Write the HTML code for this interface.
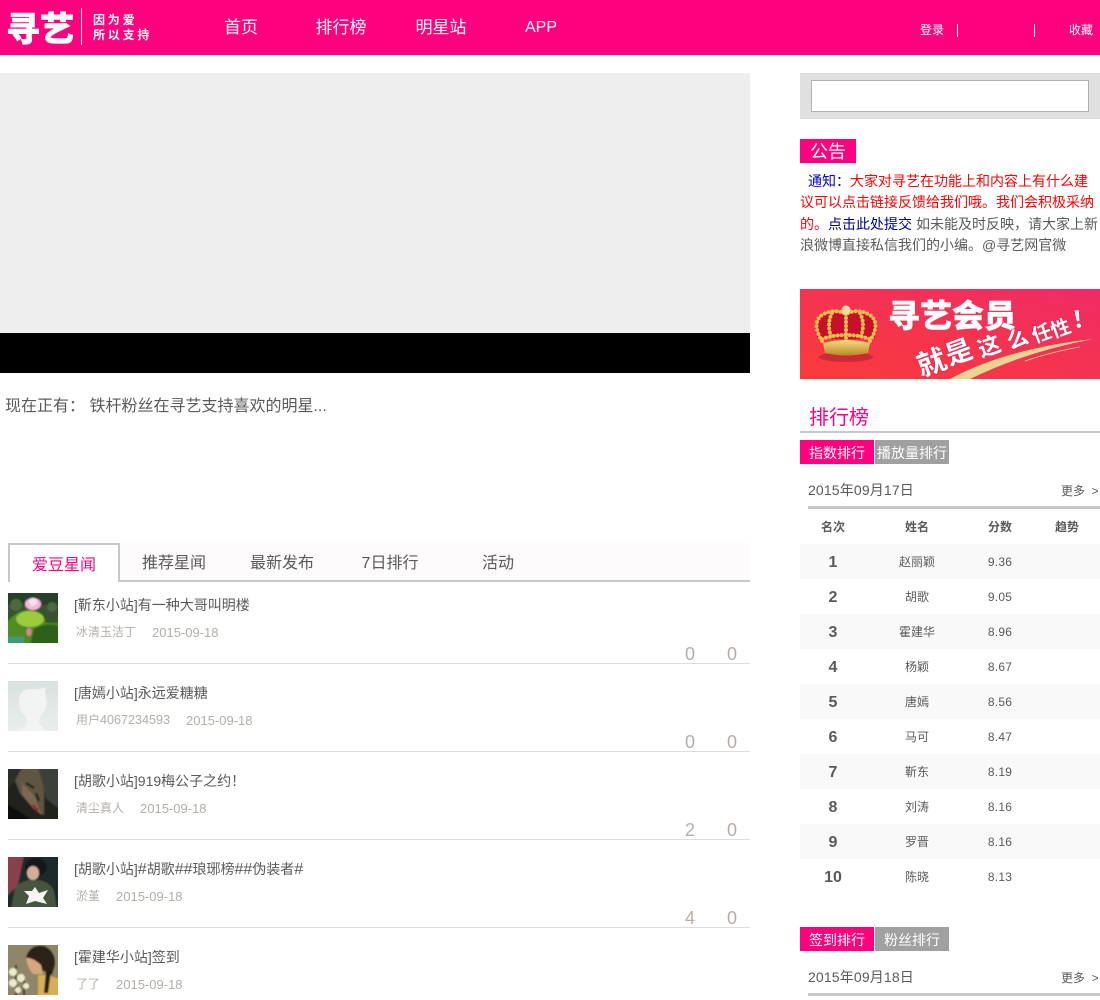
<!DOCTYPE html>
<html lang="zh"><head><meta charset="utf-8"><title>寻艺</title>
<style>
html,body{margin:0;padding:0;background:#fff}
body{width:1100px;height:1000px;overflow:hidden;position:relative;font-family:"Liberation Sans","Noto Sans CJK SC",sans-serif;color:#5a5a5a}
.a,.a *{box-sizing:border-box}
.a{position:absolute;white-space:nowrap}
.t{position:absolute;white-space:nowrap;line-height:20px}
.c{transform:translateX(-50%)}
.h{font-size:14px}
.u{font-size:12px;color:#b5aea8}
.d{font-size:13px;color:#b5aea8}
.n{font-size:18px;color:#b5aea8}
.r{font-size:16px;font-weight:700;transform:translateX(-50%)}
.m{font-size:12px;transform:translateX(-50%)}
.s{font-size:12px;letter-spacing:.2px;transform:translateX(-50%)}
.th{font-size:12px;font-weight:700;transform:translateX(-50%)}
.sl{left:93px;font-size:12px;font-weight:700;color:#fff;letter-spacing:2.8px}
.nav{font-size:17px;color:#fff;transform:translateX(-50%)}
.tc{font-family:"Noto Sans CJK TC",sans-serif}
.hs{font-size:16px}
</style></head><body>
<div class="a" style="left:0;top:0;width:1100px;height:55px;background:#ff007f"></div>
<div class="t" style="left:6px;top:8px;font-size:34px;line-height:38px;font-weight:900;color:#fff;-webkit-text-stroke:.6px #fff;font-family:'Noto Sans CJK SC',sans-serif">寻艺</div>
<div class="a" style="left:81px;top:8px;width:1px;height:37px;background:#fff"></div>
<div class="t sl" style="top:10px">因为爱</div>
<div class="t sl" style="top:25px">所以支持</div>
<div class="t nav" style="left:241px;top:18px">首页</div>
<div class="t nav" style="left:341px;top:18px">排行榜</div>
<div class="t nav" style="left:441px;top:18px">明星站</div>
<div class="t nav" style="left:541px;top:18px;font-size:16px">APP</div>
<div class="t" style="left:920px;top:20px;font-size:12px;color:#fff">登录</div>
<div class="a" style="left:957px;top:24px;width:1px;height:13px;background:#fff"></div>
<div class="a" style="left:1034px;top:24px;width:1px;height:13px;background:#fff"></div>
<div class="t" style="left:1069px;top:20px;font-size:12px;color:#fff">收藏</div>

<div class="a" style="left:0;top:73px;width:750px;height:260px;background:#eee"></div>
<div class="a" style="left:0;top:333px;width:750px;height:40px;background:#000"></div>
<div class="t" style="left:5px;top:394px;font-size:16px">现在正有<span class="tc">：</span> 铁杆粉丝在寻艺支持喜欢的明星...</div>

<div class="a" style="left:8px;top:543px;width:742px;height:37px;background:#fdfbfc"></div>
<div class="a" style="left:120px;top:580px;width:630px;height:2px;background:#c8c8c8"></div>
<div class="a" style="left:8px;top:543px;width:112px;height:39px;background:#fff;border:2px solid #c8c8c8;border-bottom:0"></div>
<div class="t c" style="left:64px;top:556px;font-size:16px;color:#ff007f">爱豆星闻</div>
<div class="t c" style="left:174px;top:554px;font-size:16px">推荐星闻</div>
<div class="t c" style="left:282px;top:554px;font-size:16px">最新发布</div>
<div class="t c" style="left:390px;top:554px;font-size:16px">7日排行</div>
<div class="t c" style="left:498px;top:554px;font-size:16px">活动</div>

<svg width="0" height="0" style="position:absolute"><defs><filter id="b" x="-5%" y="-5%" width="110%" height="110%"><feGaussianBlur stdDeviation=".7"/></filter></defs></svg>

<!-- item 1 -->
<svg class="a" style="left:8px;top:593px" width="50" height="50" viewBox="0 0 50 50"><g filter="url(#b)"><rect x="-2" y="-2" width="54" height="54" fill="#37532f"/><rect x="-2" y="-2" width="54" height="14" fill="#25402c"/><circle cx="8" cy="12" r="6" fill="#4b6a3c"/><circle cx="44" cy="14" r="5" fill="#4b6b3f"/><path d="M-2 30Q8 18 20 17Q34 17 38 30L50 30V52H-2Z" fill="#4f8c22"/><ellipse cx="22" cy="26" rx="14" ry="8" fill="#9ccc3e"/><path d="M26 36Q38 29 52 33V52H22Z" fill="#2e5f1f"/><ellipse cx="25" cy="11" rx="8" ry="6" fill="#f6b6d8"/><ellipse cx="25" cy="9" rx="4" ry="4" fill="#fbe2ef"/><rect x="-2" y="44" width="18" height="8" fill="#3c9b7c"/><ellipse cx="21" cy="39" rx="2.5" ry="4" fill="#e5809e"/></g></svg>
<div class="t h" style="left:74px;top:595px">[靳东小站]有一种大哥叫明楼</div>
<div class="t u" style="left:76px;top:622px">冰清玉洁丁</div>
<div class="t d" style="left:152px;top:623px">2015-09-18</div>
<div class="t n" style="left:685px;top:644px">0</div>
<div class="t n" style="left:727px;top:644px">0</div>
<div class="a" style="left:8px;top:663px;width:742px;height:1px;background:#ddd"></div>

<!-- item 2 -->
<svg class="a" style="left:8px;top:681px" width="50" height="50" viewBox="0 0 50 50"><defs><linearGradient id="g2" x1="0" x2="0" y1="0" y2="1"><stop offset="0" stop-color="#d9e2e0"/><stop offset="1" stop-color="#e9eeed"/></linearGradient></defs><rect width="50" height="50" fill="url(#g2)"/><path d="M11 22Q10 9 22 8Q30 9 38 6Q36 10 38 16Q40 26 35 32Q31 36 31 41Q33 47 40 50H10Q18 47 19 41Q19 36 15 33Q11 28 11 22Z" fill="#f1f4f3"/></svg>
<div class="t h" style="left:74px;top:683px">[唐嫣小站]永远爱糖糖</div>
<div class="t u" style="left:76px;top:710px">用户<span style="font-size:12.6px">4067234593</span></div>
<div class="t d" style="left:186px;top:711px">2015-09-18</div>
<div class="t n" style="left:685px;top:732px">0</div>
<div class="t n" style="left:727px;top:732px">0</div>
<div class="a" style="left:8px;top:751px;width:742px;height:1px;background:#ddd"></div>

<!-- item 3 -->
<svg class="a" style="left:8px;top:769px" width="50" height="50" viewBox="0 0 50 50"><g filter="url(#b)"><rect x="-2" y="-2" width="54" height="54" fill="#20241f"/><path d="M30 -2H52V40L38 30Z" fill="#3b403a"/><path d="M4 4L20 -2H30L36 20 36 46 26 40 12 24Z" fill="#5f5441"/><path d="M14 14L26 26 34 46 26 40 14 26Z" fill="#7d6652"/><path d="M18 14l8 5M28 24l3 8" stroke="#1e1410" stroke-width="2"/><path d="M25 36l5 6" stroke="#8a2a2a" stroke-width="2.5"/><path d="M-2 -2H14L6 14-2 20Z" fill="#2a2f29"/><path d="M-2 34L26 52H-2Z" fill="#111"/></g></svg>
<div class="t h" style="left:74px;top:771px">[胡歌小站]919梅公子之约！</div>
<div class="t u" style="left:76px;top:798px">清尘真人</div>
<div class="t d" style="left:140px;top:799px">2015-09-18</div>
<div class="t n" style="left:685px;top:820px">2</div>
<div class="t n" style="left:727px;top:820px">0</div>
<div class="a" style="left:8px;top:839px;width:742px;height:1px;background:#ddd"></div>

<!-- item 4 -->
<svg class="a" style="left:8px;top:857px" width="50" height="50" viewBox="0 0 50 50"><g filter="url(#b)"><rect x="-2" y="-2" width="54" height="54" fill="#1a2b2c"/><path d="M-2 -2H16L10 28 -2 40Z" fill="#8a3f4c"/><ellipse cx="28" cy="10" rx="11" ry="9" fill="#17181c"/><ellipse cx="25" cy="16" rx="6" ry="7" fill="#d4ae98"/><path d="M3 52L7 30Q16 22 26 23Q41 23 46 34L49 52Z" fill="#465540"/></g><path d="M27 30l4 6 9-3-5 8 4 6-12-3-9 3 3-8-5-5 8 0z" fill="#f4f4f0"/></svg>
<div class="t h" style="left:74px;top:859px">[胡歌小站]<span class="hs">#</span>胡歌<span class="hs">##</span>琅琊榜<span class="hs">##</span>伪装者<span class="hs">#</span></div>
<div class="t u" style="left:76px;top:886px">淤堇</div>
<div class="t d" style="left:116px;top:887px">2015-09-18</div>
<div class="t n" style="left:685px;top:908px">4</div>
<div class="t n" style="left:727px;top:908px">0</div>
<div class="a" style="left:8px;top:927px;width:742px;height:1px;background:#ddd"></div>

<!-- item 5 -->
<svg class="a" style="left:8px;top:945px" width="50" height="50" viewBox="0 0 50 50"><g filter="url(#b)"><rect x="-2" y="-2" width="54" height="54" fill="#8f8568"/><path d="M30 30L38 30 52 34V52H30Z" fill="#d8b052"/><path d="M18 12Q22 -1 36 1Q48 6 47 20L44 30 36 26Q22 24 18 12Z" fill="#2b2118"/><path d="M18 13Q24 12 33 20L35 29 25 29Q19 22 18 13Z" fill="#d7a67f"/><path d="M38 26l5 0-3 22-4 0Z" fill="#241d14"/><path d="M8 20V52M16 30V52" stroke="#3a3626" stroke-width="2"/><g fill="#ecebcd"><circle cx="5" cy="27" r="4"/><circle cx="13" cy="33" r="4"/><circle cx="5" cy="38" r="4"/><circle cx="18" cy="41" r="3"/><circle cx="10" cy="45" r="3"/></g></g></svg>
<div class="t h" style="left:74px;top:947px">[霍建华小站]签到</div>
<div class="t u" style="left:76px;top:974px">了了</div>
<div class="t d" style="left:116px;top:975px">2015-09-18</div>

<!-- right -->
<div class="a" style="left:800px;top:73px;width:300px;height:46px;background:#e0e0e0"></div>
<div class="a" style="left:811px;top:80px;width:278px;height:32px;background:#fff;border:1px solid #b0b0b0"></div>
<div class="a" style="left:800px;top:139px;width:56px;height:24px;background:#ff007f"></div>
<div class="t c" style="left:828px;top:142px;font-size:18px;color:#fff">公告</div>
<div class="t h" style="left:808px;top:171px;color:#00d">通知：</div>
<div class="t h" style="left:850px;top:171px;color:#f00">大家对寻艺在功能上和内容上有什么建</div>
<div class="t h" style="left:800px;top:192px;color:#f00">议可以点击链接反馈给我们哦。我们会积极采纳</div>
<div class="t h" style="left:800px;top:214px;color:#f00">的。</div>
<div class="t h" style="left:828px;top:214px;color:#008">点击此处提交</div>
<div class="t h" style="left:916px;top:214px">如未能及时反映，请大家上新</div>
<div class="t h" style="left:800px;top:235px">浪微博直接私信我们的小编。@寻艺网官微</div>

<!-- banner -->
<svg class="a" style="left:800px;top:289px" width="300" height="90" viewBox="0 0 300 90">
<defs><linearGradient id="g" x1="0" x2="1" y1="1" y2="0"><stop offset="0" stop-color="#fb3a3a"/><stop offset="1" stop-color="#ee2c66"/></linearGradient><linearGradient id="y" x1="0" x2="0" y1="0" y2="1"><stop offset="0" stop-color="#f3dc80"/><stop offset="1" stop-color="#b98a20"/></linearGradient></defs>
<rect width="300" height="90" fill="url(#g)"/>
<ellipse cx="46" cy="68" rx="27" ry="5" fill="#a71f30" opacity=".55"/>
<path d="M18 50Q10 32 22 26Q34 20 46 26Q58 20 70 26Q82 32 74 50Z" fill="#c90f2c"/>
<g fill="none" stroke="#e6bf4a" stroke-width="4" stroke-linecap="round" stroke-dasharray="0 4">
<path d="M22 52Q11 34 22 26Q34 19 46 25Q58 19 70 26Q81 34 70 52"/>
<path d="M46 25V50"/><path d="M32 24Q26 36 32 50"/><path d="M60 24Q66 36 60 50"/>
<path d="M22 50Q46 42 70 50"/></g>
<circle cx="46" cy="21" r="4.5" fill="#f4dca0"/>
<path d="M23 54Q46 48 70 54L68 64Q46 69 25 64Z" fill="url(#y)"/>
<text x="88" y="38" font-size="32" font-weight="900" fill="#fff" stroke="#fff" stroke-width=".4" font-family="Noto Sans CJK SC,sans-serif">寻艺会员</text>
<path d="M150 90Q205 60 293 50Q225 63 170 90Z" fill="#e8d690"/>
<path d="M225 72Q255 62 280 58" stroke="#e8d690" stroke-width=".7" fill="none"/>
<g font-family="Noto Sans CJK SC,sans-serif" font-weight="900" fill="#fff" stroke="#d81f55" stroke-width=".5" text-anchor="middle">
<text transform="translate(135 83) rotate(-20)" font-size="29">就</text>
<text transform="translate(162 72) rotate(-20)" font-size="27">是</text>
<text transform="translate(192 65) rotate(-20)" font-size="23">这</text>
<text transform="translate(220 57) rotate(-20)" font-size="22">么</text>
<text transform="translate(244 51) rotate(-20)" font-size="20">任</text>
<text transform="translate(263 46) rotate(-20)" font-size="20">性</text>
<text transform="translate(285 38) rotate(-8)" font-size="24">！</text></g>
</svg>

<div class="t" style="left:809px;top:408px;font-size:20px;color:#ff007f">排行榜</div>
<div class="a" style="left:800px;top:431px;width:300px;height:2px;background:#c8c8c8"></div>
<div class="a" style="left:800px;top:440px;width:74px;height:24px;background:#ff007f"></div>
<div class="a" style="left:875px;top:440px;width:74px;height:24px;background:#a0a0a0"></div>
<div class="t c h" style="left:837px;top:443px;color:#fff">指数排行</div>
<div class="t c h" style="left:912px;top:443px;color:#fff">播放量排行</div>
<div class="t" style="left:808px;top:480px;font-size:14px;letter-spacing:.15px">2015年09月17日</div>
<div class="t" style="left:1061px;top:481px;font-size:12px">更多 &nbsp;&gt;</div>
<div class="a" style="left:808px;top:506px;width:292px;height:3px;background:#c8c8c8"></div>
<div class="t th" style="left:833px;top:517px">名次</div>
<div class="t th" style="left:917px;top:517px">姓名</div>
<div class="t th" style="left:1000px;top:517px">分数</div>
<div class="t th" style="left:1067px;top:517px">趋势</div>

<div class="a" style="left:800px;top:544px;width:300px;height:35px;background:#f9f9f9"></div>
<div class="a" style="left:800px;top:614px;width:300px;height:35px;background:#f9f9f9"></div>
<div class="a" style="left:800px;top:684px;width:300px;height:35px;background:#f9f9f9"></div>
<div class="a" style="left:800px;top:754px;width:300px;height:35px;background:#f9f9f9"></div>
<div class="a" style="left:800px;top:824px;width:300px;height:35px;background:#f9f9f9"></div>

<div class="t r" style="left:833px;top:553px">1</div><div class="t m" style="left:917px;top:552px">赵丽颖</div><div class="t s" style="left:1000px;top:552px">9.36</div>
<div class="t r" style="left:833px;top:588px">2</div><div class="t m" style="left:917px;top:587px">胡歌</div><div class="t s" style="left:1000px;top:587px">9.05</div>
<div class="t r" style="left:833px;top:623px">3</div><div class="t m" style="left:917px;top:622px">霍建华</div><div class="t s" style="left:1000px;top:622px">8.96</div>
<div class="t r" style="left:833px;top:658px">4</div><div class="t m" style="left:917px;top:657px">杨颖</div><div class="t s" style="left:1000px;top:657px">8.67</div>
<div class="t r" style="left:833px;top:693px">5</div><div class="t m" style="left:917px;top:692px">唐嫣</div><div class="t s" style="left:1000px;top:692px">8.56</div>
<div class="t r" style="left:833px;top:728px">6</div><div class="t m" style="left:917px;top:727px">马可</div><div class="t s" style="left:1000px;top:727px">8.47</div>
<div class="t r" style="left:833px;top:763px">7</div><div class="t m" style="left:917px;top:762px">靳东</div><div class="t s" style="left:1000px;top:762px">8.19</div>
<div class="t r" style="left:833px;top:798px">8</div><div class="t m" style="left:917px;top:797px">刘涛</div><div class="t s" style="left:1000px;top:797px">8.16</div>
<div class="t r" style="left:833px;top:833px">9</div><div class="t m" style="left:917px;top:832px">罗晋</div><div class="t s" style="left:1000px;top:832px">8.16</div>
<div class="t r" style="left:833px;top:868px">10</div><div class="t m" style="left:917px;top:867px">陈晓</div><div class="t s" style="left:1000px;top:867px">8.13</div>

<div class="a" style="left:800px;top:927px;width:74px;height:24px;background:#ff007f"></div>
<div class="a" style="left:875px;top:927px;width:74px;height:24px;background:#a0a0a0"></div>
<div class="t c h" style="left:837px;top:930px;color:#fff">签到排行</div>
<div class="t c h" style="left:912px;top:930px;color:#fff">粉丝排行</div>
<div class="t" style="left:808px;top:967px;font-size:14px;letter-spacing:.15px">2015年09月18日</div>
<div class="t" style="left:1061px;top:968px;font-size:12px">更多 &nbsp;&gt;</div>
<div class="a" style="left:808px;top:993px;width:292px;height:3px;background:#c8c8c8"></div>
</body></html>
